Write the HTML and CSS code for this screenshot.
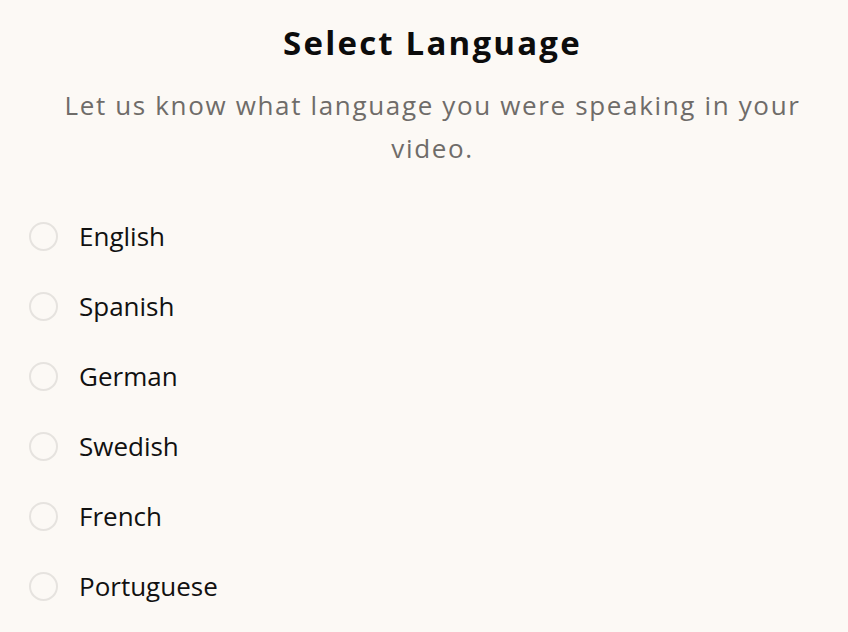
FILE: index.html
```html
<!DOCTYPE html>
<html>
<head>
<meta charset="utf-8">
<link rel="stylesheet" href="styles.css">
</head>
<body>
<div class="page">
  <h1 class="title">Select Language</h1>
  <p class="subtitle">Let us know what language you were speaking in your video.</p>
  <ul class="options">
    <li class="option"><span class="radio"></span><span class="label">English</span></li>
    <li class="option"><span class="radio"></span><span class="label">Spanish</span></li>
    <li class="option"><span class="radio"></span><span class="label">German</span></li>
    <li class="option"><span class="radio"></span><span class="label">Swedish</span></li>
    <li class="option"><span class="radio"></span><span class="label">French</span></li>
    <li class="option"><span class="radio"></span><span class="label">Portuguese</span></li>
  </ul>
</div>
</body>
</html>
```
FILE: styles.css
```css
html, body {
  margin: 0;
  padding: 0;
  background: #fcf9f5;
}
body {
  font-family: "Open Sans", "DejaVu Sans", sans-serif;
  width: 848px;
  height: 632px;
  overflow: hidden;
}
.page {
  padding: 20px 12px 0 29px;
}
.title {
  margin: 0;
  text-align: center;
  font-size: 33px;
  line-height: 46px;
  font-weight: 700;
  letter-spacing: 2.2px;
  color: #0c0c0c;
}
.subtitle {
  margin: 18px 0 0 0;
  text-align: center;
  font-size: 26px;
  line-height: 43px;
  letter-spacing: 1.65px;
  color: #6f6c69;
}
.options {
  list-style: none;
  margin: 31px 0 0 0;
  padding: 0;
  display: flex;
  flex-direction: column;
}
.option {
  display: flex;
  align-items: center;
  height: 70px;
  gap: 21px;
}
.radio {
  width: 29px;
  height: 29px;
  border: 2px solid #e6e3df;
  border-radius: 50%;
  box-sizing: border-box;
  flex: none;
}
.label {
  font-size: 26px;
  color: #111;
}
```
